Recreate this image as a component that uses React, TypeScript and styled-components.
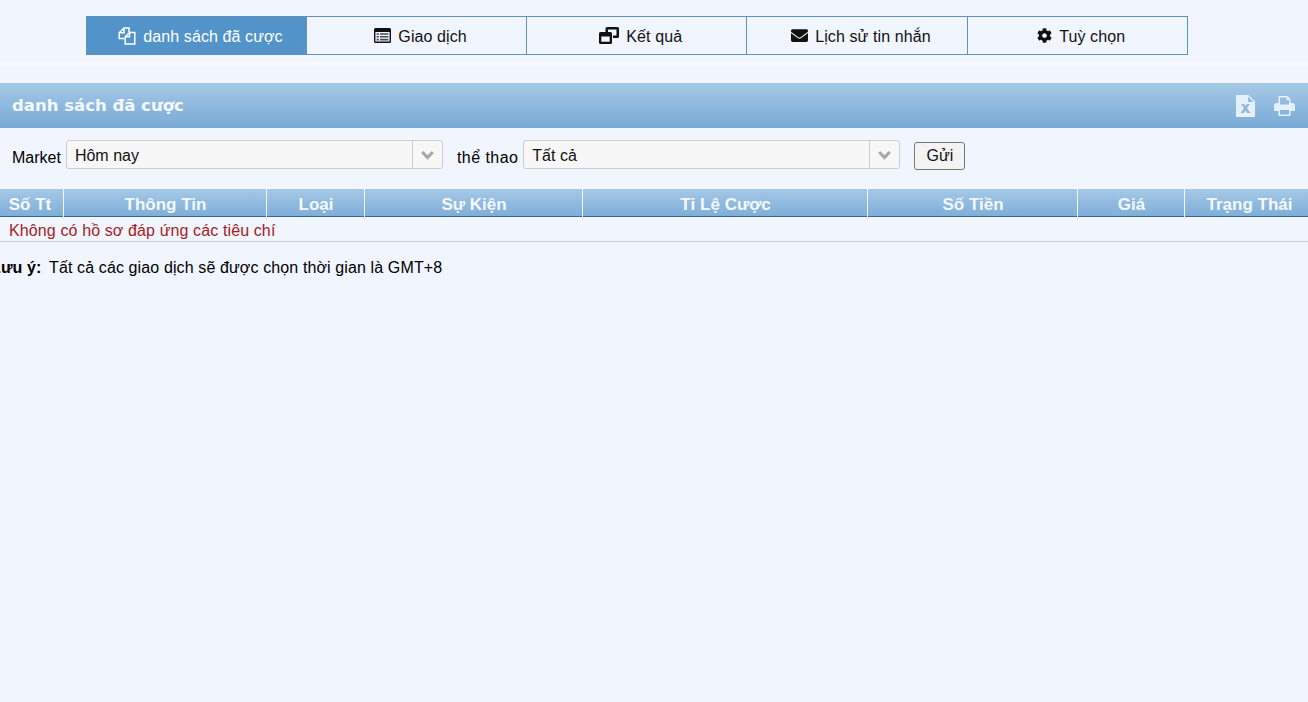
import React from "react";
import styled, { createGlobalStyle } from "styled-components";
import { FaEnvelope, FaCog } from "react-icons/fa";

const Global = createGlobalStyle`
  html, body { margin: 0; padding: 0; background: #f1f5fe; overflow: hidden; }
  body { font-family: "Liberation Sans", Arial, sans-serif; color: #000; }
`;

const Page = styled.div`
  width: 1308px;
  height: 702px;
  overflow: hidden;
`;

const TabBar = styled.nav`
  display: flex;
  margin: 16px 0 0 86px;
  width: 1102px;
  height: 39px;
`;

const Tab = styled.a<{ $active?: boolean }>`
  flex: 0 0 220.2px;
  box-sizing: border-box;
  display: flex;
  align-items: center;
  justify-content: center;
  gap: 7px;
  padding: 2px 0 0 8px;
  font-size: 16px;
  letter-spacing: 0.1px;
  background: ${(p) => (p.$active ? "#5293c9" : "#f1f5fe")};
  color: ${(p) => (p.$active ? "#fff" : "#111")};
  border: 1px solid #5f93bb;
  border-left-width: ${(p) => (p.$active ? "1px" : "0")};
  &:first-child { flex-basis: 221px; }
  &:nth-child(n + 3) { border-left-width: 0; }
  & svg { flex: none; position: relative; top: -1px; }
`;

const Stripe = styled.div`
  height: 5px;
  margin-top: 6px;
  background: #f7f9fe;
`;

const TitleBar = styled.header`
  margin-top: 17px;
  height: 45px;
  box-sizing: border-box;
  padding: 0 13px 0 12px;
  display: flex;
  align-items: center;
  justify-content: space-between;
  background: linear-gradient(#a6c8e6, #78aad6);
`;

const Title = styled.h1`
  margin: 0;
  font: bold 16.5px "DejaVu Sans", Verdana, sans-serif;
  color: #f4f8fd;
`;

const TitleIcons = styled.div`
  display: flex;
  gap: 19px;
  color: #e6f0fa;
  align-items: center;
`;

const FilterRow = styled.form`
  display: flex;
  align-items: flex-start;
  height: 61px;
  box-sizing: border-box;
  padding: 12px 0 0 12px;
`;

const FilterLabel = styled.label<{ $tracking?: number }>`
  font-size: 16px;
  line-height: 20px;
  padding-top: 8px;
  margin-right: 5px;
  letter-spacing: ${(p) => p.$tracking ?? 0}px;
`;

const Select = styled.div`
  width: 377px;
  height: 29px;
  box-sizing: border-box;
  display: flex;
  background: #f7f7f7;
  border: 1px solid #ccc;
  border-radius: 3px;
  margin-right: 14px;
`;

const SelectValue = styled.span`
  flex: 1;
  padding-left: 8px;
  font-size: 16px;
  line-height: 29px;
  color: #111;
`;

const SelectArrow = styled.span`
  width: 29px;
  border-left: 1px solid #ccc;
  display: flex;
  align-items: center;
  justify-content: center;
  color: #a8a8a8;
`;

const Submit = styled.button`
  width: 51px;
  height: 28px;
  margin: 2px 0 0 0;
  padding: 0;
  font: 16px "Liberation Sans", Arial, sans-serif;
  color: #111;
  background: #f3f3f3;
  border: 1px solid #777;
  border-radius: 3px;
`;

const Table = styled.table`
  width: 1308px;
  border-collapse: separate;
  border-spacing: 0;
  table-layout: fixed;
`;

const Th = styled.th<{ $w: number }>`
  position: relative;
  width: ${(p) => p.$w}px;
  height: 28px;
  box-sizing: border-box;
  padding: 4px 0 0;
  font: bold 17px "Liberation Sans", Arial, sans-serif;
  color: #f4f8fd;
  background: linear-gradient(#a6c8e6, #7eaed8);
  border-bottom: 1px solid #33688f;
  &:first-child { padding-right: 4px; }
  &:last-child { padding-left: 6px; }
  &:not(:last-child)::after {
    content: "";
    position: absolute;
    right: 0;
    top: -1px;
    bottom: -1px;
    width: 1px;
    background: #f1f5fe;
  }
`;

const EmptyCell = styled.td`
  height: 25px;
  padding: 4px 0 0 9px;
  box-sizing: border-box;
  font-size: 16px;
  letter-spacing: 0.12px;
  color: #a5221c;
  border-bottom: 1px solid #c9ccd6;
`;

const Note = styled.p`
  margin: 16px 0 0 -9px;
  font-size: 16px;
  line-height: 20px;
  letter-spacing: 0.12px;
  white-space: nowrap;
`;

const NoteLabel = styled.b`
  margin-right: 7.5px;
`;

const CopyIcon = () => (
  <svg width="18" height="18" viewBox="0 0 18 18" fill="none" stroke="currentColor" strokeWidth="1.5">
    <path d="M6.5 11.5H1.2V5.8L6 1H11V5" />
    <path d="M6 1.2V5.8H1.2" />
    <path d="M11.5 5.5H16.8V17H7.2V9.8L11.5 5.5V9.8H7.2" />
  </svg>
);

const ListIcon = () => (
  <svg width="17" height="15" viewBox="0 0 17 15" fill="currentColor">
    <path fillRule="evenodd" d="M0 1.5A1.5 1.5 0 0 1 1.5 0h14A1.5 1.5 0 0 1 17 1.5v12a1.5 1.5 0 0 1-1.5 1.5h-14A1.5 1.5 0 0 1 0 13.5zM1.4 4v9.6h14.2V4z" />
    <path d="M2.6 5.2h2.2v1.6H2.6zM6 5.2h8.4v1.6H6zM2.6 8h2.2v1.6H2.6zM6 8h8.4v1.6H6zM2.6 10.8h2.2v1.6H2.6zM6 10.8h8.4v1.6H6z" opacity=".75" />
  </svg>
);

const WindowsIcon = () => (
  <svg width="20" height="17" viewBox="0 0 20 17" fill="currentColor">
    <path fillRule="evenodd" d="M6.500 1.500A1.500 1.500 0 0 1 8 0h10.500A1.500 1.500 0 0 1 20 1.500v8a1.500 1.500 0 0 1-1.500 1.500H14V8.500h3.500V2.500H9V5H6.500z" />
    <path fillRule="evenodd" d="M0 6.500A1.500 1.500 0 0 1 1.500 5h10A1.500 1.500 0 0 1 13 6.500v9a1.500 1.500 0 0 1-1.500 1.500h-10A1.500 1.500 0 0 1 0 15.500zM2.300 9.500v5.200h8.400V9.500z" />
  </svg>
);

const ExcelIcon = () => (
  <svg width="19" height="22" viewBox="0 0 19 22" fill="currentColor">
    <path fillRule="evenodd" d="M0 0h12.500L19 6.500V22H0zM12 1.500V7h5.500zM5 9l3 4.200L4.600 18h3.200l1.700-2.800 1.700 2.800h3.200L10.900 13.200 14 9h-3L9.500 11.200 8 9z" />
  </svg>
);

const PrintIcon = () => (
  <svg width="21" height="20" viewBox="0 0 21 20" fill="currentColor">
    <path fillRule="evenodd" d="M4.500 0h9L16.500 3v4h2A2.500 2.500 0 0 1 21 9.500V15h-4.500v5h-12v-5H0V9.500A2.500 2.500 0 0 1 2.500 7h2zM6 1.500V8.500h9V4h-2.500V1.500zM6 14v4.500h9V14z" />
  </svg>
);

const Chevron = () => (
  <svg width="13" height="10" viewBox="0 0 13 10" fill="none" stroke="currentColor" strokeWidth="3">
    <path d="M1.200 2L6.500 7.500 11.800 2" />
  </svg>
);

const tabs = [
  { label: "danh sách đã cược", icon: <CopyIcon />, active: true },
  { label: "Giao dịch", icon: <ListIcon /> },
  { label: "Kết quả", icon: <WindowsIcon /> },
  { label: "Lịch sử tin nhắn", icon: <FaEnvelope size={17} /> },
  { label: "Tuỳ chọn", icon: <FaCog size={15} /> },
];

const columns: [string, number][] = [
  ["Số Tt", 64], ["Thông Tin", 203], ["Loại", 98], ["Sự Kiện", 218],
  ["Tỉ Lệ Cược", 285], ["Số Tiền", 210], ["Giá", 107], ["Trạng Thái", 123],
];

export default function App() {
  return (
    <Page>
      <Global />
      <TabBar>
        {tabs.map(({ label, icon, active }) => (
          <Tab key={label} $active={active}>{icon}{label}</Tab>
        ))}
      </TabBar>
      <Stripe />
      <TitleBar>
        <Title>danh sách đã cược</Title>
        <TitleIcons><ExcelIcon /><PrintIcon /></TitleIcons>
      </TitleBar>
      <FilterRow>
        <FilterLabel>Market</FilterLabel>
        <Select><SelectValue>Hôm nay</SelectValue><SelectArrow><Chevron /></SelectArrow></Select>
        <FilterLabel $tracking={0.45}>thể thao</FilterLabel>
        <Select><SelectValue>Tất cả</SelectValue><SelectArrow><Chevron /></SelectArrow></Select>
        <Submit type="button">Gửi</Submit>
      </FilterRow>
      <Table>
        <thead>
          <tr>{columns.map(([c, w]) => <Th key={c} $w={w}>{c}</Th>)}</tr>
        </thead>
        <tbody>
          <tr><EmptyCell colSpan={8}>Không có hồ sơ đáp ứng các tiêu chí</EmptyCell></tr>
        </tbody>
      </Table>
      <Note><NoteLabel>Lưu ý:</NoteLabel>Tất cả các giao dịch sẽ được chọn thời gian là GMT+8</Note>
    </Page>
  );
}
